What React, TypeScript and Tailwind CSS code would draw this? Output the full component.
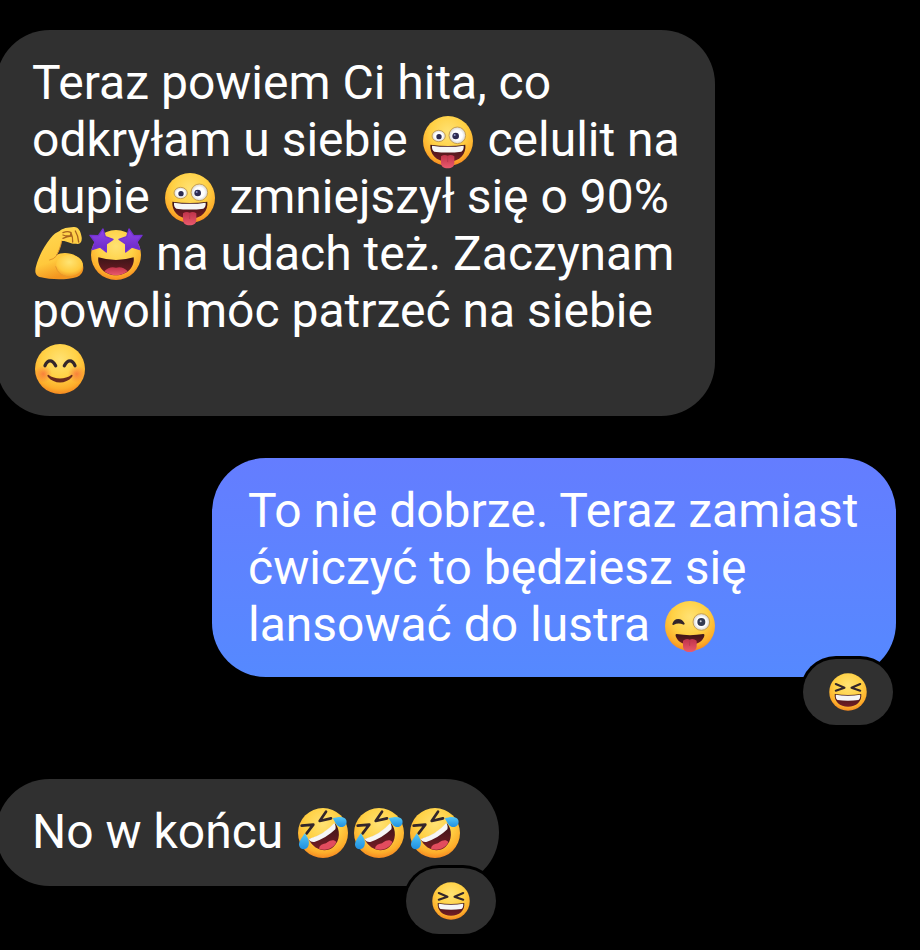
import React from 'react'
import clsx from 'clsx'

interface EmojiProps {
  label: string
  className?: string
  face?: boolean
  children: React.ReactNode
}

const TEXT_EMOJI = 'inline-block size-14 -my-1 align-[-9px] overflow-visible'

// The face is a 150 unit circle at 0,0 with a 9 unit margin around it
const Emoji: React.FC<EmojiProps> = ({ label, className = TEXT_EMOJI, face = true, children }) => (
  <svg viewBox="-9 -9 168 168" role="img" aria-label={label} className={className}>
    {face && <circle cx="75" cy="75" r="75" fill="url(#face)" />}
    {children}
  </svg>
)

const Gradients: React.FC = () => (
  <svg className="absolute size-0" aria-hidden="true">
    <defs>
      <radialGradient id="face" cx="0.5" cy="0.32" r="0.7">
        <stop offset="0" stopColor="#ffe274" />
        <stop offset="0.5" stopColor="#ffd145" />
        <stop offset="0.82" stopColor="#fdae2b" />
        <stop offset="1" stopColor="#f4821f" />
      </radialGradient>
      <radialGradient id="eye">
        <stop offset="0.6" stopColor="#ffffff" />
        <stop offset="1" stopColor="#d5d3cf" />
      </radialGradient>
      <radialGradient id="blush">
        <stop offset="0" stopColor="#f76b3c" stopOpacity="0.75" />
        <stop offset="1" stopColor="#f76b3c" stopOpacity="0" />
      </radialGradient>
      <linearGradient id="tongue" x1="0" y1="0" x2="0" y2="1">
        <stop offset="0" stopColor="#c0334a" />
        <stop offset="1" stopColor="#ea5a6d" />
      </linearGradient>
      <linearGradient id="mouth" x1="0" y1="0" x2="0" y2="1">
        <stop offset="0" stopColor="#3b1518" />
        <stop offset="1" stopColor="#761c25" />
      </linearGradient>
      <linearGradient id="star" x1="0" y1="0" x2="0" y2="1">
        <stop offset="0" stopColor="#9247ea" />
        <stop offset="1" stopColor="#6727c4" />
      </linearGradient>
      <linearGradient id="tear" x1="0" y1="0" x2="0" y2="1">
        <stop offset="0" stopColor="#55c8f7" />
        <stop offset="1" stopColor="#1f8fe0" />
      </linearGradient>
      <linearGradient id="arm" x1="0" y1="0" x2="0.3" y2="1">
        <stop offset="0" stopColor="#ffda55" />
        <stop offset="0.7" stopColor="#ffc83c" />
        <stop offset="1" stopColor="#f3951f" />
      </linearGradient>
      <radialGradient id="biceps" cx="0.5" cy="0.35" r="0.65">
        <stop offset="0" stopColor="#ffe473" />
        <stop offset="0.7" stopColor="#ffca3e" />
        <stop offset="1" stopColor="#f3a128" />
      </radialGradient>
    </defs>
  </svg>
)

const Zany = () => (
  <Emoji label="🤪">
    <ellipse cx="47" cy="60" rx="20" ry="17" fill="url(#eye)" stroke="#c9a050" strokeWidth="3" />
    <circle cx="48" cy="62" r="8" fill="#2c2b52" />
    <circle cx="103" cy="58" r="25" fill="url(#eye)" stroke="#c9a050" strokeWidth="3" />
    <circle cx="98" cy="60" r="10" fill="#2c2b52" />
    <circle cx="95" cy="57" r="3" fill="#8f95c4" />
    <path d="M22 86Q75 94 127 86C130 112 112 137 75 137S20 112 22 86Z" fill="url(#mouth)" />
    <path d="M27 89Q75 96 122 89C123 98 120 104 115 107Q75 112 34 107C29 104 26 98 27 89Z" fill="#f6f6f6" />
    <path d="M54 121Q64 114 74 119Q84 114 94 121V140C94 151 86 157 74 157S54 151 54 140Z" fill="url(#tongue)" />
    <path d="M74 121V137" stroke="#b93a50" strokeWidth="3" strokeLinecap="round" />
  </Emoji>
)

const StarStruck = () => (
  <Emoji label="🤩">
    <path d="M22 82Q75 98 128 82C132 112 108 136 75 136S18 112 22 82Z" fill="url(#mouth)" />
    <path d="M40 124Q56 107 75 113Q94 107 110 124Q94 136 75 136T40 124Z" fill="url(#tongue)" />
    <g fill="url(#star)" stroke="#7431d3" strokeWidth="4" strokeLinejoin="round">
      <path d="M36 -3L43 20L66 28L46 42L46 66L27 51L3 59L12 36L-3 16L22 17Z" />
      <path d="M114 -3L107 20L84 28L104 42L104 66L123 51L147 59L138 36L153 16L128 17Z" />
    </g>
  </Emoji>
)

const Smiling = () => (
  <Emoji label="😊">
    <circle cx="25" cy="90" r="26" fill="url(#blush)" />
    <circle cx="125" cy="90" r="26" fill="url(#blush)" />
    <path d="M30 65C38 46 52 46 62 65" fill="none" stroke="#33262b" strokeWidth="10" strokeLinecap="round" />
    <path d="M88 65C98 46 112 46 120 65" fill="none" stroke="#33262b" strokeWidth="10" strokeLinecap="round" />
    <path d="M40 92C60 107 90 107 110 92C114 92 113 96 111 99C93 121 57 121 39 99C37 96 36 92 40 92Z" fill="#6b2a1d" />
  </Emoji>
)

const Winking = () => (
  <Emoji label="😜">
    <path d="M25 69C30 53 48 53 56 68Q40 60 25 69Z" fill="#33262b" stroke="#33262b" strokeWidth="6" strokeLinejoin="round" />
    <circle cx="109" cy="63" r="25" fill="url(#eye)" stroke="#c9a050" strokeWidth="3" />
    <circle cx="109" cy="63" r="12" fill="#333a52" />
    <circle cx="107" cy="61" r="3" fill="#c7ccd8" />
    <path d="M35 99Q75 106 115 99C119 99 119 103 117 108C109 126 92 131 75 131S41 126 33 108C31 103 31 99 35 99Z" fill="url(#mouth)" />
    <path d="M54 119Q64 111 74 116Q84 111 95 119V134C95 146 87 153 74 153S54 146 54 134Z" fill="url(#tongue)" />
    <path d="M74 119V133" stroke="#b93a50" strokeWidth="3" strokeLinecap="round" />
  </Emoji>
)

const Rofl = () => (
  <Emoji label="🤣">
    <path d="M11 53L46 50L26 76" fill="none" stroke="#33262b" strokeWidth="8" strokeLinecap="round" strokeLinejoin="round" />
    <path d="M84 11L65 39L99 31" fill="none" stroke="#33262b" strokeWidth="8" strokeLinecap="round" strokeLinejoin="round" />
    <path d="M32 94Q78 82 111 46C127 64 128 98 106 117S48 127 32 94Z" fill="url(#mouth)" />
    <path d="M63 122C66 106 81 110 88 103C97 95 110 94 115 102C107 121 85 130 63 122Z" fill="#e34c5e" />
    <path d="M32 93Q78 80 109 45C113 51 114 58 112 64Q85 90 49 102C40 103 35 99 32 93Z" fill="#f6f6f6" />
    <path d="M104 31C120 25 141 24 145 37C149 51 136 61 124 56C114 52 111 41 104 31Z" fill="url(#tear)" />
    <path d="M20 76C30 88 36 103 31 114C26 127 8 127 4 115C0 102 12 90 20 76Z" fill="url(#tear)" />
  </Emoji>
)

const Laughing = () => (
  <Emoji label="😆" className="size-[42px]">
    <path d="M26 43L61 58L26 70" fill="none" stroke="#33262b" strokeWidth="8" strokeLinecap="round" strokeLinejoin="round" />
    <path d="M124 43L89 58L124 70" fill="none" stroke="#33262b" strokeWidth="8" strokeLinecap="round" strokeLinejoin="round" />
    <path d="M22 83Q75 91 128 83C131 113 108 134 75 134S19 113 22 83Z" fill="url(#mouth)" />
    <path d="M26 86Q75 93 124 86C125 97 122 104 117 107Q75 113 33 107C28 104 25 97 26 86Z" fill="#f6f6f6" />
  </Emoji>
)

const Biceps = () => (
  <Emoji label="💪" face={false}>
    <path
      d="M74 3C82 -5 98 -8 116 -9C131 -10 137 4 140 22C142 36 134 45 124 41C110 44 98 32 80 33C77 50 72 62 64 76C82 64 120 68 137 90C151 110 146 132 126 141C96 151 44 149 18 142C0 138 -2 124 4 106C11 80 27 48 47 24C56 13 64 7 74 3Z"
      fill="url(#arm)"
    />
    <ellipse cx="103" cy="106" rx="41" ry="32" fill="url(#biceps)" />
    <path d="M80 33C77 50 72 62 64 78Q56 88 44 90" fill="none" stroke="#e0912a" strokeWidth="3" strokeLinecap="round" />
    <path d="M62 110Q70 138 100 141" fill="none" stroke="#e8992b" strokeWidth="3" strokeLinecap="round" />
    <path d="M84 8Q98 2 108 8L106 17Q94 20 84 15M108 8Q114 22 113 36M121 3Q130 18 131 36M84 25Q96 19 108 18" fill="none" stroke="#a9641f" strokeWidth="4" strokeLinecap="round" />
  </Emoji>
)

interface BubbleProps {
  mine?: boolean
  reaction?: React.ReactNode
  className?: string
  children: React.ReactNode
}

const Bubble: React.FC<BubbleProps> = ({ mine = false, reaction, className, children }) => (
  <li
    className={clsx(
      'relative rounded-[54px] px-9',
      mine ? 'mr-6 self-end bg-linear-to-b from-[#647dff] to-[#5589ff]' : '-ml-1 self-start bg-[#303030]',
      className
    )}
  >
    <p>{children}</p>
    {reaction && (
      <button
        type="button"
        className="absolute right-[3px] -bottom-12 flex h-[66px] w-[90px] items-center justify-center rounded-full bg-[#303030] ring-3 ring-black"
      >
        {reaction}
      </button>
    )}
  </li>
)

export default function App() {
  return (
    <main className="min-h-screen bg-black font-[Roboto,sans-serif] text-[48px] leading-[57px] text-white">
      <Gradients />
      <ul className="flex flex-col pt-[30px]">
        <Bubble className="max-w-[719px] pt-6 pr-7 pb-5">
          Teraz powiem Ci hita, co odkryłam u siebie <Zany /> celulit na dupie <Zany /> zmniejszył się o 90%{' '}
          <span className="whitespace-nowrap">
            <Biceps />
            <StarStruck />
          </span>{' '}
          na udach też. Zaczynam powoli móc patrzeć na siebie <Smiling />
        </Bubble>
        <Bubble mine reaction={<Laughing />} className="mt-[42px] max-w-[684px] py-6">
          To nie dobrze. Teraz zamiast ćwiczyć to będziesz się lansować do lustra <Winking />
        </Bubble>
        <Bubble reaction={<Laughing />} className="mt-[102px] pt-6 pb-[26px]">
          No w końcu <Rofl />
          <Rofl />
          <Rofl />
        </Bubble>
      </ul>
    </main>
  )
}
